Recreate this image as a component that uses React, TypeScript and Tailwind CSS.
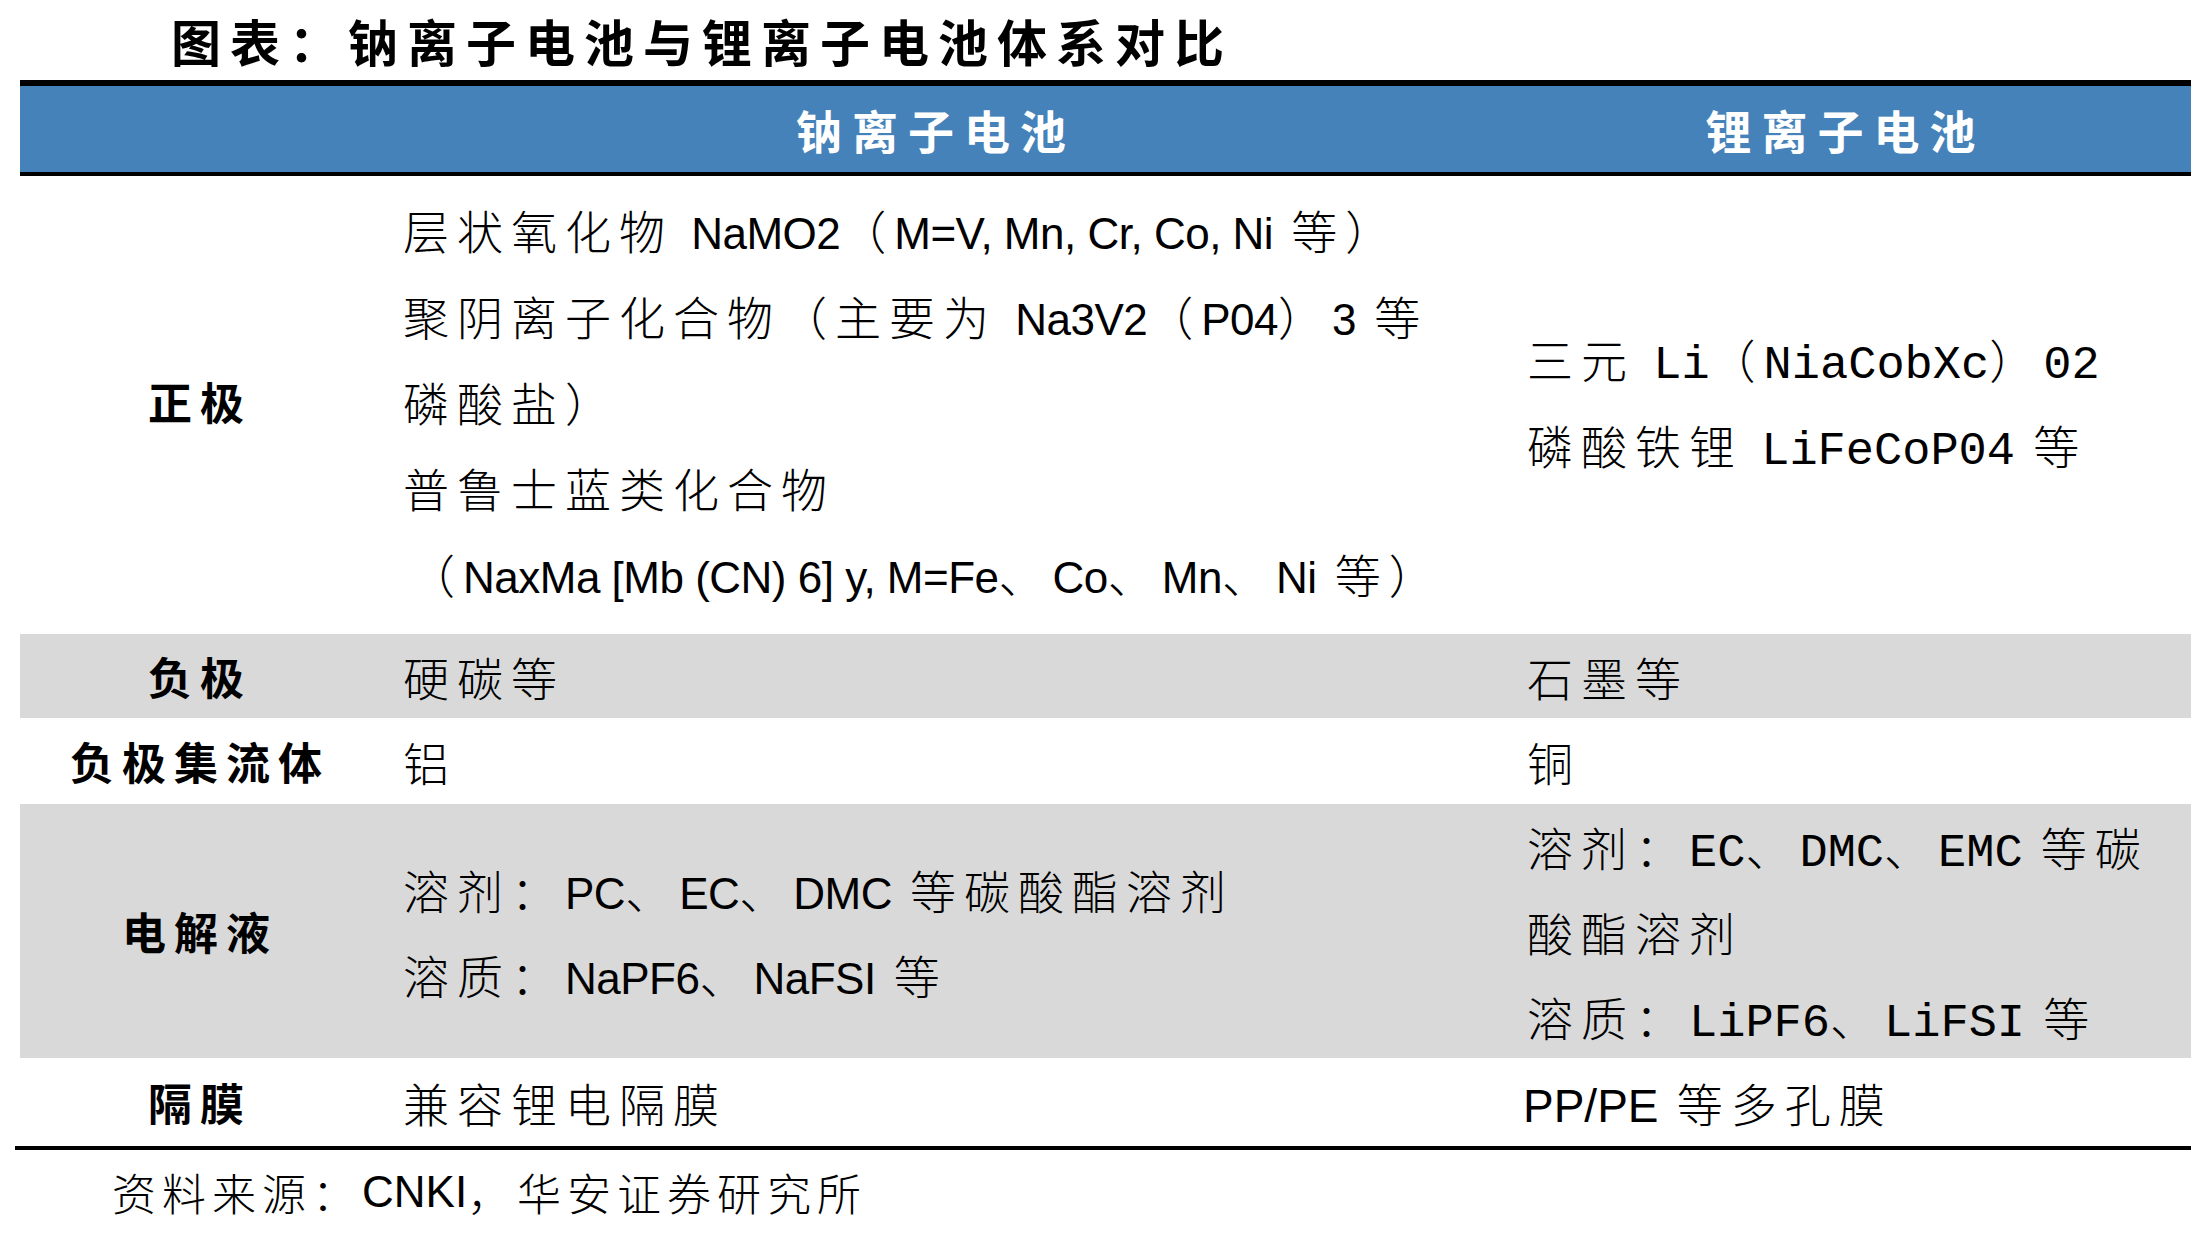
import type { ReactNode } from 'react'

// Latin runs: sodium column uses a tight sans, lithium column a monospace
function N({ children }: { children: ReactNode }) {
  return (
    <span className="font-['Liberation_Sans_Narrow','Liberation_Sans',sans-serif] text-[44px] leading-none tracking-[-0.5px]">
      {children}
    </span>
  )
}

function M({ children }: { children: ReactNode }) {
  return (
    <span className="font-['Liberation_Mono',monospace] text-[47px] leading-none tracking-normal">{children}</span>
  )
}

function Label({ children }: { children: ReactNode }) {
  return (
    <div className="flex items-center justify-center text-[44px] font-bold tracking-[8px]">
      <span className="mr-[-8px]">{children}</span>
    </div>
  )
}

export default function App() {
  return (
    <div className="h-[1244px] w-[2204px] bg-white font-['Noto_Sans_CJK_SC',sans-serif] font-light text-black">
      <div className="flex h-[80px] items-center pl-[171px] text-[50px] font-bold leading-none tracking-[9px]">
        图表：钠离子电池与锂离子电池体系对比
      </div>

      <div className="ml-[20px] w-[2171px]">
        {/* header */}
        <div className="grid h-[96px] grid-cols-[352px_1118px_701px] border-t-[6px] border-b-[4px] border-black bg-[#4682BA] text-[46px] font-bold tracking-[10px] text-white">
          <div />
          <div className="flex items-center justify-center pl-[10px]">钠离子电池</div>
          <div className="flex items-center justify-center pl-[10px]">锂离子电池</div>
        </div>

        {/* 正极 */}
        <div className="grid h-[458px] grid-cols-[352px_1118px_701px] pb-[8px] text-[46px] leading-[86px] tracking-[8px]">
          <Label>正极</Label>
          <div className="flex flex-col justify-center whitespace-nowrap pl-[31px]">
            <div>
              层状氧化物 <N>NaMO2</N>（<N>M=V, Mn, Cr, Co, Ni</N> 等）
            </div>
            <div>
              聚阴离子化合物（主要为 <N>Na3V2</N>（<N>P04</N>）<N>3</N> 等
            </div>
            <div>磷酸盐）</div>
            <div>普鲁士蓝类化合物</div>
            <div className="pl-[6px]">
              （<N>NaxMa [Mb (CN) 6] y, M=Fe</N>、<N>Co</N>、<N>Mn</N>、<N>Ni</N> 等）
            </div>
          </div>
          <div className="flex flex-col justify-center whitespace-nowrap pl-[37px]">
            <div>
              三元 <M>Li</M>（<M>NiaCobXc</M>）<M>02</M>
            </div>
            <div>
              磷酸铁锂 <M>LiFeCoP04</M> 等
            </div>
          </div>
        </div>

        {/* 负极 */}
        <div className="grid h-[84px] grid-cols-[352px_1118px_701px] items-center bg-[#D9D9D9] text-[46px] tracking-[8px]">
          <Label>负极</Label>
          <div className="pl-[31px]">硬碳等</div>
          <div className="pl-[37px]">石墨等</div>
        </div>

        {/* 负极集流体 */}
        <div className="grid h-[86px] grid-cols-[352px_1118px_701px] items-center text-[46px] tracking-[8px]">
          <Label>负极集流体</Label>
          <div className="pl-[31px]">铝</div>
          <div className="pl-[37px]">铜</div>
        </div>

        {/* 电解液 */}
        <div className="grid h-[254px] grid-cols-[352px_1118px_701px] bg-[#D9D9D9] text-[46px] leading-[85px] tracking-[8px]">
          <Label>电解液</Label>
          <div className="flex flex-col justify-center whitespace-nowrap pl-[31px]">
            <div>
              溶剂：<N>PC</N>、<N>EC</N>、<N>DMC</N> 等碳酸酯溶剂
            </div>
            <div>
              溶质：<N>NaPF6</N>、<N>NaFSI</N> 等
            </div>
          </div>
          <div className="flex flex-col justify-center whitespace-nowrap pl-[37px]">
            <div>
              溶剂：<M>EC</M>、<M>DMC</M>、<M>EMC</M> 等碳
            </div>
            <div>酸酯溶剂</div>
            <div>
              溶质：<M>LiPF6</M>、<M>LiFSI</M> 等
            </div>
          </div>
        </div>

        {/* 隔膜 */}
        <div className="grid h-[88px] grid-cols-[352px_1118px_701px] items-center text-[46px] tracking-[8px]">
          <Label>隔膜</Label>
          <div className="pl-[31px]">兼容锂电隔膜</div>
          <div className="pl-[33px]">
            <span className="font-['Liberation_Sans',sans-serif] text-[46px] leading-none tracking-normal">PP/PE</span>{' '}
            等多孔膜
          </div>
        </div>
      </div>

      <div className="ml-[15px] h-[4px] w-[2176px] bg-black" />

      <div className="flex h-[84px] items-center pl-[112px] text-[44px] tracking-[6px]">
        资料来源：<span className="font-['Liberation_Sans',sans-serif] tracking-normal">CNKI</span>，华安证券研究所
      </div>
    </div>
  )
}
